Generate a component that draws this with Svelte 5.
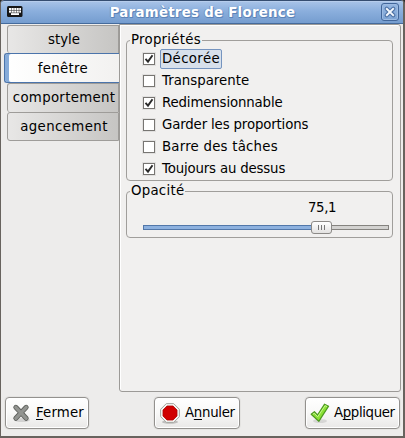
<script>
  const tabs = [
    { label: 'style', height: 28, spacing: 0 },
    { label: 'fenêtre', height: 30, spacing: 0.3 },
    { label: 'comportement', height: 29, spacing: 0.3 },
    { label: 'agencement', height: 29, spacing: 0.4 }
  ];
  let active = $state('fenêtre');
  let options = $state([
    { label: 'Décorée', on: true, spacing: 0.35 },
    { label: 'Transparente', on: false, spacing: 0 },
    { label: 'Redimensionnable', on: true, spacing: -0.15 },
    { label: 'Garder les proportions', on: false, spacing: -0.15 },
    { label: 'Barre des tâches', on: false, spacing: 0.22 },
    { label: 'Toujours au dessus', on: true, spacing: -0.17 }
  ]);
  let opacity = $state(75.1);
</script>

<div class="window">
  <header>
    <svg class="kbd" width="16" height="12" viewBox="0 0 16 12">
      <rect x="0" y="0" width="15.500" height="11" rx="1.500" fill="#161616" />
      <path d="M2 2h12v5H2zM4 7h8v2H4z" fill="#fff" />
      <path d="M2 4.500h12M2 6.800h12M4.500 2v5M7 2v5M9.500 2v5M12 2v5" stroke="#444" stroke-width=".6" />
    </svg>
    <h1>Paramètres de Florence</h1>
    <button class="close" aria-label="Fermer la fenêtre">
      <svg width="16" height="16" viewBox="0 0 16 16">
        <path d="M4.700 4.700l6.600 6.600M11.300 4.700l-6.600 6.600" stroke="#4c71a5" stroke-width="4.200" stroke-linecap="round" />
        <path d="M4.900 4.900l6.200 6.200M11.100 4.900l-6.200 6.200" stroke="#f4f8fd" stroke-width="2" stroke-linecap="square" />
      </svg>
    </button>
  </header>

  <main>
    <nav>
      {#each tabs as t}
        <button class="tab" class:active={t.label === active} style="height:{t.height}px;letter-spacing:{t.spacing}px" onclick={() => (active = t.label)}>{t.label}</button>
      {/each}
    </nav>
    <section class="panel">
      <fieldset class="props">
        <legend>Propriétés</legend>
        {#each options as o, i}
          <button class="check" onclick={() => (o.on = !o.on)}>
            <span class="box">
              {#if o.on}
                <svg width="10" height="10" viewBox="0 0 10 10"><path d="M1.500 4.800L4 7.600L8.500 1.200" fill="none" stroke="#2a2a2a" stroke-width="1.900" /></svg>
              {/if}
            </span>
            <span class="label" class:focus={i === 0} style="letter-spacing:{o.spacing}px">{o.label}</span>
          </button>
        {/each}
      </fieldset>
      <fieldset class="opacity">
        <legend>Opacité</legend>
        <div class="value">{String(opacity).replace('.', ',')}</div>
        <div class="slider">
          <div class="fill" style="width:{(opacity / 100) * 227}px"></div>
          <div class="thumb"><i></i><i></i><i></i></div>
          <div class="rest"></div>
        </div>
      </fieldset>
    </section>
  </main>

  <footer>
    <button class="action close-action">
      <svg width="20" height="20" viewBox="0 0 20 20">
        <ellipse cx="11" cy="17" rx="8" ry="2" fill="#000" opacity=".12" />
        <path d="M4.800 4.300l10.400 11M15.200 4.300l-10.400 11" stroke="#5f615d" stroke-width="5" stroke-linecap="round" />
        <path d="M4.800 4.300l10.400 11M15.200 4.300l-10.400 11" stroke="#929490" stroke-width="3.200" stroke-linecap="round" />
      </svg>
      <span class="t"><u>F</u>ermer</span>
    </button>
    <button class="action cancel">
      <svg width="20" height="21" viewBox="0 0 20 21">
        <ellipse cx="10" cy="19" rx="8" ry="1.800" fill="#000" opacity=".2" />
        <path d="M6.300 .6h7.400l5.700 5.700v7.400l-5.700 5.700H6.300L.6 13.700V6.300z" fill="#f3f4f1" stroke="#a5a7a2" />
        <path d="M7 3h6l4 4v6l-4 4H7l-4-4V7z" fill="#d00000" stroke="#b00000" stroke-width=".8" />
      </svg>
      <span class="t">A<u>n</u>nuler</span>
    </button>
    <button class="action apply">
      <svg width="20" height="20" viewBox="0 0 20 20">
        <ellipse cx="10" cy="18" rx="7" ry="2" fill="#000" opacity=".1" />
        <path d="M1.200 11.200L4.400 8.700L7.500 12L14.600 1.200L18.600 3.200L8.800 18.300z" fill="#8ae234" stroke="#4e9a22" stroke-width="1.200" stroke-linejoin="round" />
        <path d="M2.900 11.300L4.300 10.200L7.700 13.800L15.100 2.700L17 3.600" fill="none" stroke="#c5f590" />
      </svg>
      <span class="t">A<u>p</u>pliquer</span>
    </button>
  </footer>
</div>

<style>
  :global(body) { margin: 0; background: #2b2b2b; }
  .window, button, legend { font-family: "DejaVu Sans", sans-serif; font-size: 13.33px; color: #000; }
  .window {
    width: 405px; height: 438px; box-sizing: border-box; display: flex; flex-direction: column;
    background: #edeceb; border: 1px solid #68635e; border-bottom-width: 2px; border-right-width: 2px;
    border-top: 0; overflow: hidden; border-radius: 4px 4px 0 0;
  }
  button { padding: 0; margin: 0; border: 0; background: none; }
  svg { display: block; flex: none; }
  header {
    height: 24px; flex: none; box-sizing: border-box; margin: 0 -2px 0 -1px; display: flex; align-items: center;
    padding: 1px 6px 0 8px; border-top: 1px solid #354d70; border-bottom: 1px solid #456b9c;
    border-left: 1px solid #456b9c; border-right: 1px solid #456b9c; border-radius: 4px 4px 0 0;
    background: linear-gradient(#a9c4e8, #8bafdd 45%, #759dcf); box-shadow: inset 0 1px #b6cdec;
  }
  .kbd { margin-left: -2px; margin-top: -1px; }
  h1 {
    flex: 1; margin: 0; text-align: center; color: #fff; font-size: 13.33px; line-height: 20px; white-space: nowrap;
    letter-spacing: .28px; padding-left: 1px;
    text-shadow: 1px 1px #5c84b8, -1px 0 #6b92c5, 0 1px #5c84b8;
  }
  .close {
    width: 18px; height: 18px; box-sizing: border-box; border: 1px solid #41669a; border-radius: 3px;
    background: linear-gradient(#95b7e2, #7da4d4); display: flex; align-items: center; justify-content: center;
    box-shadow: inset 0 0 0 1px #9dbbe2; margin-top: -1px; margin-right: -1px;
  }
  main { display: flex; height: 368px; flex: none; }
  nav { width: 118px; flex: none; display: flex; flex-direction: column; align-items: flex-end; z-index: 1; }
  .tab {
    width: 112px; flex: none; box-sizing: border-box; border: 1px solid #9e9c99; border-bottom: 0; border-radius: 3px 0 0 3px;
    background: linear-gradient(90deg, #e8e7e6, #c6c5c3); line-height: 20px; display: flex; align-items: center; justify-content: center;
    padding-left: 2px; white-space: nowrap;
  }
  .tab:first-child { margin-top: 1px; }
  .tab:last-child { border-bottom: 1px solid #9e9c99; }
  .tab.active {
    width: 115px; border: 1px solid #4b74ab; border-right: 0; box-shadow: inset 4px 0 #86abd9;
    background: linear-gradient(90deg, #fff, #f2f1f0); padding-top: 2px;
  }
  .panel {
    box-sizing: border-box; width: 282px; height: 368px; border: 1px solid #9c9a97; border-radius: 0 3px 3px 3px;
    background: #f1f0ef; padding: 7px 6px; box-shadow: inset 1px 1px #fff;
  }
  fieldset { margin: 0; box-sizing: border-box; border: 1px solid #a09e9b; border-radius: 4px; min-width: 0; width: 267px; }
  legend { margin: 0 0 0 -13px; padding: 0 1px; line-height: 16px; height: 16px; letter-spacing: .25px; }
  .props { height: 149px; padding: 0 0 0 16px; }
  .check { display: flex; align-items: center; height: 22px; }
  .box {
    width: 12px; height: 12px; box-sizing: border-box; border: 1px solid #777572; background: #fff;
    display: flex; align-items: center; justify-content: center; box-shadow: 0 0 0 1px #e1e0df;
  }
  .label { margin-left: 5px; height: 20px; line-height: 18px; box-sizing: border-box; border: 1px solid transparent; padding: 0 1px; border-radius: 2px; white-space: nowrap; }
  .focus { border-color: #7594bf; background: #d7e0eb; }
  .opacity { height: 55px; padding: 0 3px 0 16px; margin-top: 2px; }
  .opacity legend { line-height: 15px; }
  .value { margin-left: 165px; line-height: 18px; height: 18px; letter-spacing: -.4px; }
  .slider { display: flex; align-items: center; height: 14px; margin-top: 3px; }
  .fill { box-sizing: border-box; height: 5px; border: 1px solid #5277a9; border-right: 0; background: #8db1df; flex: none; margin-right: -2px; }
  .rest { flex: 1; box-sizing: border-box; height: 5px; border: 1px solid #85837f; border-left: 0; background: #d3d2d0; }
  .thumb {
    width: 21px; height: 13px; box-sizing: border-box; border: 1px solid #8c8a87; border-radius: 3px; flex: none; z-index: 1;
    background: linear-gradient(#fff, #e3e2e1); display: flex; gap: 2px; align-items: center; justify-content: center;
  }
  .thumb i { width: 1px; height: 5px; background: #777; }
  footer { display: flex; justify-content: space-between; padding: 5px 3px 0 4px; }
  .action {
    height: 32px; box-sizing: border-box; border: 1px solid #93918e; border-radius: 4px; box-shadow: inset 0 0 0 1px #fff, 0 0 0 1px #e4e3e1;
    background: linear-gradient(#fff, #f8f8f7 50%, #e9e8e7); display: flex; align-items: center;
  }
  .close-action { width: 84px; padding-left: 5px; letter-spacing: .15px; }
  .cancel { width: 86px; padding-left: 5px; letter-spacing: -.3px; }
  .apply { width: 95px; padding-left: 4px; letter-spacing: -.38px; }
  .t { margin-left: 5px; line-height: 20px; white-space: nowrap; }
  .apply .t { margin-left: 4px; }
  u { text-decoration-thickness: 1px; text-underline-offset: 2px; text-decoration-skip-ink: none; }
</style>
